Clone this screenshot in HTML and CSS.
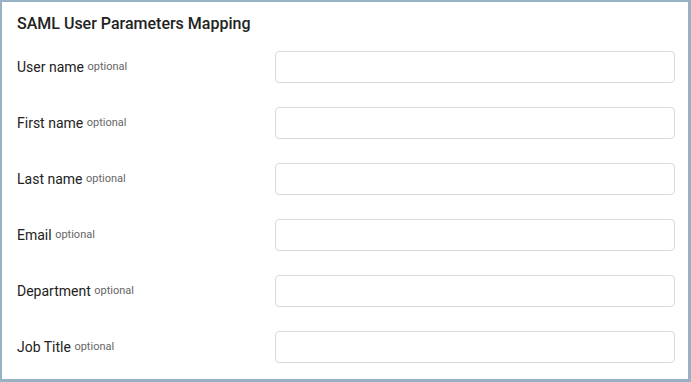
FILE: index.html
```html
<!DOCTYPE html>
<html>
<head>
    <title>SAML User Parameters Mapping</title>
    <link rel="stylesheet" href="styles.css">
</head>
<body>
    <div class="panel">
        <h2 class="title">SAML User Parameters Mapping</h2>
        <form class="mapping">
            <div class="row">
                <label class="label">User name <span class="opt">optional</span></label>
                <input type="text" class="field" name="username">
            </div>
            <div class="row">
                <label class="label">First name <span class="opt">optional</span></label>
                <input type="text" class="field" name="firstname">
            </div>
            <div class="row">
                <label class="label">Last name <span class="opt">optional</span></label>
                <input type="text" class="field" name="lastname">
            </div>
            <div class="row">
                <label class="label">Email <span class="opt">optional</span></label>
                <input type="text" class="field" name="email">
            </div>
            <div class="row">
                <label class="label">Department <span class="opt">optional</span></label>
                <input type="text" class="field" name="department">
            </div>
            <div class="row">
                <label class="label">Job Title <span class="opt">optional</span></label>
                <input type="text" class="field" name="jobtitle">
            </div>
        </form>
    </div>
</body>
</html>
```

FILE: styles.css
```css
html, body {
    margin: 0;
    height: 100%;
}

body {
    background-color: #97b3c3;
    padding: 2px 3px 3px 2px;
    box-sizing: border-box;
    font-family: Roboto, "Liberation Sans", sans-serif;
    color: #222222;
}

.panel {
    background-color: #ffffff;
    height: 100%;
    padding: 12px 0 0 15px;
    box-sizing: border-box;
}

.title {
    margin: 0;
    font-size: 16px;
    font-weight: 500;
    line-height: 20px;
}

.mapping {
    margin-top: 17px;
}

.row {
    display: flex;
    align-items: center;
    height: 32px;
    margin-bottom: 24px;
}

.label {
    width: 258px;
    font-size: 14px;
}

.opt {
    font-size: 11px;
    color: #666666;
    position: relative;
    top: -2px;
}

.field {
    width: 400px;
    height: 32px;
    box-sizing: border-box;
    border: 1px solid #d9d9d9;
    border-radius: 4px;
    padding: 0 8px;
    font-size: 14px;
}
```
